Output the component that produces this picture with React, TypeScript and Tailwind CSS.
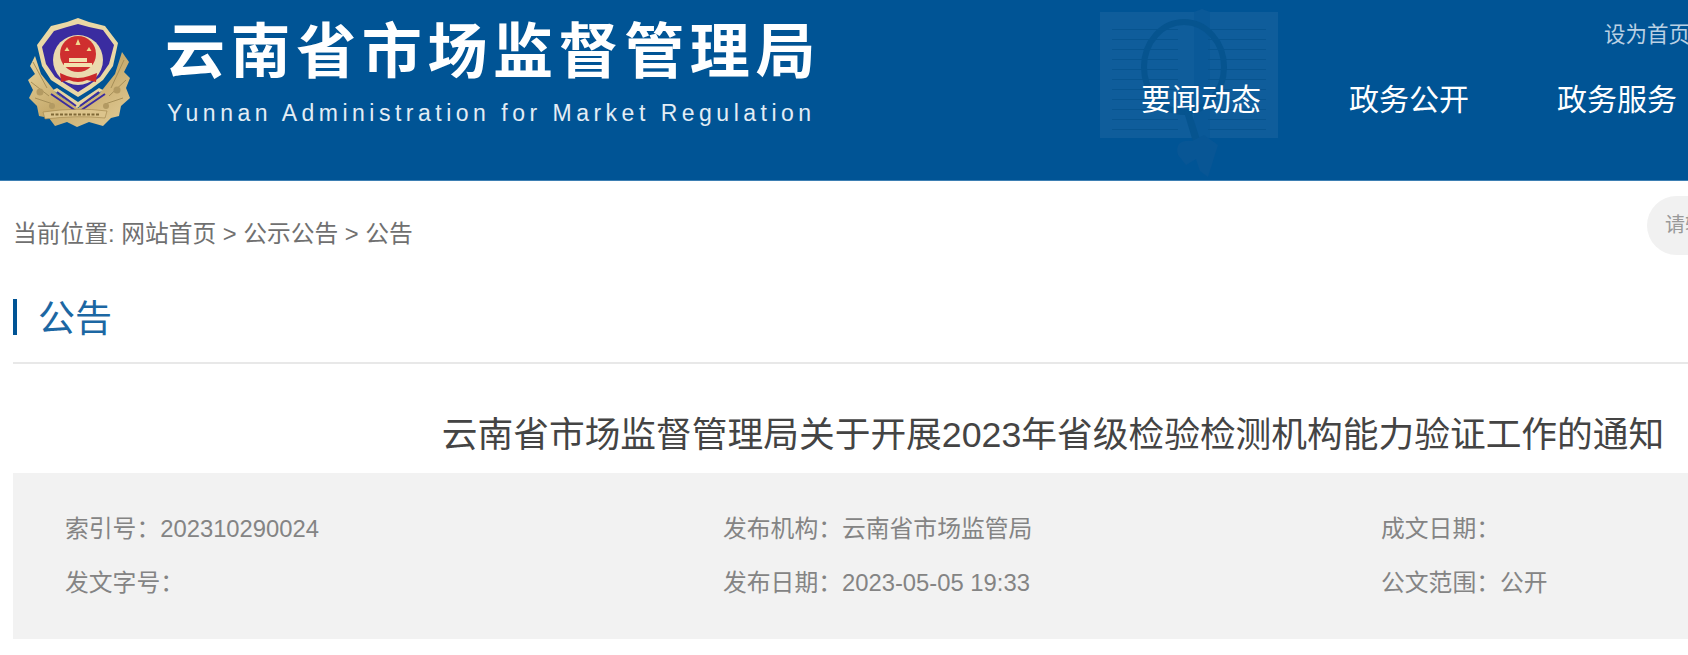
const cjk = "font-['Liberation_Sans','Noto_Sans_CJK_SC',sans-serif]";

function Emblem() {
  return (
    <svg width="104" height="110" viewBox="0 0 104 110" className="shrink-0">
      <defs>
        <linearGradient id="gold" x1="0" y1="0" x2="1" y2="1">
          <stop offset="0" stopColor="#e9d6a0" />
          <stop offset="0.5" stopColor="#c7ab6d" />
          <stop offset="1" stopColor="#e3cd98" />
        </linearGradient>
      </defs>
      <path d="M8 38 L3 48 L8 56 L1 62 L6 72 L2 80 L10 88 L12 98 L22 100 L28 108 L40 104 L50 109 L62 104 L76 108 L84 100 L92 98 L94 88 L103 80 L99 70 L103 60 L97 54 L102 44 L95 34 L88 56 L72 76 L51 90 L30 76 L14 56 Z" fill="url(#gold)" />
      <path d="M6 44 L20 70 M4 64 L22 78 M8 80 L26 86 M97 42 L84 70 M99 62 L82 78 M96 80 L78 86" stroke="#a68f58" strokeWidth="1" fill="none" />
      <circle cx="13" cy="74" r="3.5" fill="#b39a62" />
      <circle cx="90" cy="72" r="3.5" fill="#b39a62" />
      <circle cx="25" cy="88" r="3" fill="#b39a62" />
      <circle cx="79" cy="88" r="3" fill="#b39a62" />
      <path d="M26 72 L50 90 L76 72 L72 70 L51 84 L30 70 Z" fill="#e7d5a0" />
      <path d="M24 76 L49 93 M30 74 L49 88 M78 76 L53 93 M72 74 L53 88" stroke="#3a2ca0" strokeWidth="2" />
      <path d="M51 0 L62 4 L78 8 L91 25 L86 48 L76 62 L64 71 L51 79 L38 71 L24 62 L15 48 L10 27 L24 8 L40 4 Z" fill="#ead8a5" />
      <path d="M51 6 L62 9 L76 12 L87 27 L82 46 L73 59 L62 67 L51 74 L40 67 L28 59 L19 46 L15 29 L27 13 L40 9 Z" fill="#3a2ca0" />
      <circle cx="51" cy="42" r="25" fill="#eadaae" />
      <circle cx="51" cy="36" r="18" fill="#cf2f2f" />
      <path d="M51 21 L53.5 27 H48.5 Z M40 29 L42.5 33 H37.5 Z M62 29 L64.5 33 H59.5 Z" fill="#f0d88f" />
      <path d="M42 40 H60 V44 H42 Z M37 45 H65 V49 H37 Z" fill="#f2e1ae" />
      <path d="M33 55 L40 58 Q51 62 62 58 L70 55 L69 64 L60 62 Q51 66 42 62 L34 64 Z" fill="#c9272a" />
      <path d="M16 94 Q50 89 80 93 L78 100 Q50 97 18 101 Z" fill="#dcc48c" stroke="#9d8349" strokeWidth="0.6" />
      <path d="M24 96.5 H72" stroke="#7f6836" strokeWidth="2" strokeDasharray="3 1.5" />
    </svg>
  );
}

function Watermark() {
  const ys = [20, 30, 40, 50, 60, 70, 80, 90, 100, 110, 120];
  return (
    <svg width="178" height="172" viewBox="0 0 178 172" className="absolute left-[1100px] top-[9px]">
      <rect x="0" y="3" width="94" height="126" fill="#0f5d9b" />
      <rect x="110" y="3" width="68" height="126" fill="#0f5d9b" />
      <path d="M94 3 L102 0 L110 3 V129 H94 Z" fill="#0a5998" />
      {ys.map((y) => (
        <g key={y}>
          <rect x="12" y={y} width="66" height="1" fill="#07548f" />
          <rect x="108" y={y} width="58" height="1" fill="#07548f" />
        </g>
      ))}
      <ellipse cx="84" cy="58" rx="40" ry="45" fill="none" stroke="#06548f" strokeWidth="6" />
      <path d="M84 103 L94 136 L101 134 L91 102 Z" fill="#06548f" />
      <path d="M92 132 Q74 130 78 146 L86 156 L96 150 L100 162 L108 168 L118 136 L104 126 Z" fill="#085695" />
    </svg>
  );
}

export default function App() {
  return (
    <div className={`w-[1688px] h-[655px] overflow-hidden bg-white ${cjk}`}>
      <header className="relative w-[2106px] h-[181px] bg-[#005495] border-b border-[#3d7fb3] flex items-start">
        <Watermark />
        <div className="ml-[27px] mt-[18px]">
          <Emblem />
        </div>
        <div className="ml-[34px] mt-[12px] w-[660px] shrink-0 text-white whitespace-nowrap">
          <div className="font-['Noto_Sans_CJK_SC',sans-serif] font-bold text-[60px] leading-[70px] tracking-[5.6px]">云南省市场监督管理局</div>
          <div className="font-['Liberation_Sans',sans-serif] mt-[17px] pl-[2px] text-[23px] leading-[28px] tracking-[4.5px] text-[#e3edf5]">Yunnan Administration for Market Regulation</div>
        </div>
        <div className="relative ml-[316px] shrink-0 font-['Noto_Sans_CJK_SC',sans-serif] whitespace-nowrap">
          <div className="ml-[463px] mt-[19px] text-[21.5px] leading-[28px] text-[#b9d0e3]">设为首页</div>
          <nav className="flex gap-[89px] mt-[32px] text-[30px] leading-[36px] text-white">
            <span className="w-[119px]">要闻动态</span>
            <span className="w-[119px]">政务公开</span>
            <span className="w-[119px]">政务服务</span>
          </nav>
        </div>
      </header>
      <main className="w-[2106px] px-[13px]">
        <div className="flex items-start pt-[15px]">
          <div className="flex-1 pt-[24px] text-[23.76px] leading-[28px] text-[#707070] whitespace-nowrap">当前位置: 网站首页 &gt; 公示公告 &gt; 公告</div>
          <div className="w-[446px] h-[59px] rounded-full bg-[#f1f1f1] pl-[18px] text-[20px] leading-[59px] text-[#999]">请输入关键字</div>
        </div>
        <div className="mt-[44px] flex items-center h-[36px]">
          <div className="w-[4px] h-[36px] bg-[#005495]"></div>
          <h2 className="ml-[21px] pt-[5px] text-[37px] leading-[36px] text-[#1c67a3]">公告</h2>
        </div>
        <div className="mt-[27px] h-[2px] bg-[#e8e8e8]"></div>
        <h1 className="mt-[50px] text-center text-[35.73px] leading-[42px] text-[#444] whitespace-nowrap">云南省市场监督管理局关于开展2023年省级检验检测机构能力验证工作的通知</h1>
        <div className="mt-[17px] h-[166px] bg-[#f2f2f2] pl-[52px] pt-[29px] grid grid-cols-[658px_658px_658px] content-start text-[23.8px] leading-[54px] text-[#848484] whitespace-nowrap">
          <div>索引号：202310290024</div>
          <div>发布机构：云南省市场监管局</div>
          <div>成文日期：</div>
          <div>发文字号：</div>
          <div>发布日期：2023-05-05 19:33</div>
          <div>公文范围：公开</div>
        </div>
      </main>
    </div>
  );
}
